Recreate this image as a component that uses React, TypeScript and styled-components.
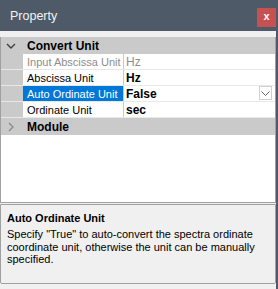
import * as React from 'react';
import styled, { createGlobalStyle } from 'styled-components';

const GlobalStyle = createGlobalStyle`
    html, body {
        margin: 0;
        padding: 0;
        background: #f0f0f0;
    }
    body {
        font-family: "Liberation Sans", Arial, sans-serif;
        font-size: 11px;
        color: #000;
    }
`;

interface IProp {
    name: string;
    value: string;
    readOnly?: boolean;
    selected?: boolean;
    dropdown?: boolean;
}

const props: IProp[] = [
    { name: 'Input Abscissa Unit', value: 'Hz', readOnly: true },
    { name: 'Abscissa Unit', value: 'Hz' },
    { name: 'Auto Ordinate Unit', value: 'False', selected: true, dropdown: true },
    { name: 'Ordinate Unit', value: 'sec' },
];

const ChevronDown = () => (
    <svg width="10" height="6" viewBox="0 0 10 6">
        <path d="M1 1 L5 5 L9 1" fill="none" stroke="#404040" strokeWidth="1.4" />
    </svg>
);

const ChevronRight = () => (
    <svg width="6" height="10" viewBox="0 0 6 10">
        <path d="M1 1 L5 5 L1 9" fill="none" stroke="#8a8a8a" strokeWidth="1.3" />
    </svg>
);

const SmallChevron = () => (
    <svg width="9" height="5" viewBox="0 0 9 5">
        <path d="M0.5 0.5 L4.5 4.5 L8.5 0.5" fill="none" stroke="#606060" strokeWidth="1" />
    </svg>
);

export default function App() {
    return (
        <Window>
            <GlobalStyle />
            <TitleBar>
                <Title>Property</Title>
                <CloseButton>x</CloseButton>
            </TitleBar>
            <Body>
                <Grid>
                    <CategoryRow>
                        <Gutter><ChevronDown /></Gutter>
                        <CategoryLabel>Convert Unit</CategoryLabel>
                    </CategoryRow>
                    {props.map(p => (
                        <PropRow key={p.name}>
                            <Gutter />
                            <NameCell selected={p.selected} readOnly={p.readOnly}>{p.name}</NameCell>
                            <ValueCell readOnly={p.readOnly}>
                                {p.value}
                                {p.dropdown && <DropButton><SmallChevron /></DropButton>}
                            </ValueCell>
                        </PropRow>
                    ))}
                    <CategoryRow>
                        <Gutter><ChevronRight /></Gutter>
                        <CategoryLabel>Module</CategoryLabel>
                    </CategoryRow>
                    <Filler />
                </Grid>
                <HelpPanel>
                    <HelpTitle>Auto Ordinate Unit</HelpTitle>
                    <HelpText>
                        Specify "True" to auto-convert the spectra ordinate coordinate unit, otherwise the unit can be manually specified.
                    </HelpText>
                </HelpPanel>
            </Body>
        </Window>
    );
}

const Window = styled.div`
    width: 278px;
    height: 289px;
    display: flex;
    flex-direction: column;
    background: #f0f0f0;
    overflow: hidden;
`;

const TitleBar = styled.div`
    height: 31px;
    flex: none;
    background: #4e5a68;
    display: flex;
    align-items: center;
    justify-content: space-between;
    padding: 0 2px 0 10px;
`;

const Title = styled.span`
    color: #f4f4f4;
    font-size: 12.5px;
    font-family: "Liberation Sans", Arial, sans-serif;
`;

const CloseButton = styled.div`
    width: 19px;
    height: 19px;
    margin-top: 4px;
    background: #c75050;
    color: #fff;
    font-weight: bold;
    font-size: 11px;
    display: flex;
    align-items: center;
    justify-content: center;
    line-height: 1;
    padding-bottom: 2px;
    box-sizing: border-box;
`;

const Body = styled.div`
    flex: 1;
    display: flex;
    flex-direction: column;
    padding: 6px 0 5px 0;
    border-right: 2px solid #4e5a68;
`;

const Grid = styled.div`
    flex: 1;
    display: flex;
    flex-direction: column;
    background: #fff;
    border: 1px solid #a0a0a0;
    border-top: none;
`;

const CategoryRow = styled.div`
    height: 17px;
    display: flex;
    align-items: center;
    background: #cacaca;
    flex: none;
`;

const Gutter = styled.div`
    width: 22px;
    align-self: stretch;
    background: #cacaca;
    display: flex;
    align-items: center;
    justify-content: center;
    flex: none;
    padding-right: 2px;
    box-sizing: border-box;
`;

const CategoryLabel = styled.span`
    font-weight: bold;
    font-size: 12px;
    padding-left: 4px;
`;

const PropRow = styled.div`
    height: 16px;
    display: flex;
    flex: none;
    border-bottom: 1px solid #e8e8e8;
    box-sizing: border-box;
`;

const NameCell = styled.div<{ selected?: boolean; readOnly?: boolean }>`
    width: 101px;
    flex: none;
    padding-left: 4px;
    box-sizing: border-box;
    display: flex;
    align-items: center;
    white-space: nowrap;
    overflow: hidden;
    border-right: 1px solid #c8c8c8;
    background: ${p => (p.selected ? '#0078d7' : '#fff')};
    color: ${p => (p.selected ? '#fff' : p.readOnly ? '#8d8d8d' : '#000')};
`;

const ValueCell = styled.div<{ readOnly?: boolean }>`
    flex: 1;
    display: flex;
    align-items: center;
    padding-left: 2px;
    font-size: 12px;
    font-weight: ${p => (p.readOnly ? 'normal' : 'bold')};
    color: ${p => (p.readOnly ? '#8d8d8d' : '#000')};
    position: relative;
`;

const DropButton = styled.div`
    position: absolute;
    right: 3px;
    top: 0;
    width: 13px;
    height: 14px;
    border: 1px solid #d0d0d0;
    background: #fff;
    display: flex;
    align-items: center;
    justify-content: center;
    box-sizing: border-box;
`;

const Filler = styled.div`
    flex: 1;
`;

const HelpPanel = styled.div`
    height: 80px;
    flex: none;
    margin-top: 1px;
    border: 1px solid #a0a0a0;
    border-radius: 0 0 2px 2px;
    background: #f0f0f0;
    padding: 6px 5px 0 6px;
    box-sizing: border-box;
`;

const HelpTitle = styled.div`
    font-weight: bold;
    font-size: 11px;
    line-height: 14px;
    margin-bottom: 3px;
`;

const HelpText = styled.div`
    font-size: 11px;
    line-height: 12.5px;
`;
